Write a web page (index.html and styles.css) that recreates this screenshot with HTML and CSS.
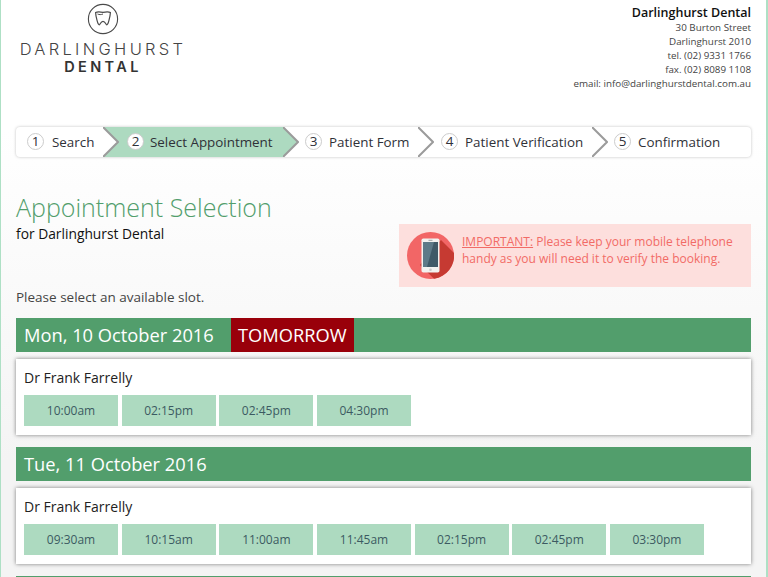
FILE: index.html
```html
<!DOCTYPE html>
<html lang="en">
<head>
<meta charset="utf-8">
<title>Appointment Selection</title>
<link rel="stylesheet" href="styles.css">
</head>
<body>
<div class="page">
  <header class="header">
    <div class="logo">
      <svg class="logo-mark" width="32" height="32" viewBox="0 0 32 32" aria-hidden="true">
        <circle cx="16" cy="16" r="14.6" fill="none" stroke="#4a4a4a" stroke-width="1.1"/>
        <path d="M8.6 9.6c2-1.3 4.4-.9 7.4-.2 3-.7 5.400-1.100 7.400.2-.1 2.900-.8 5.600-1.500 8-.5 1.800-.9 4.200-2.100 4.200-1.100 0-1.400-3.500-3.800-3.500s-2.700 3.500-3.800 3.500c-1.200 0-1.600-2.400-2.100-4.200-.7-2.400-1.400-5.100-1.500-8z" fill="none" stroke="#4a4a4a" stroke-width="1.200"/>
        <path d="M10.500 11c1.800.8 3.500.8 5.500 0" fill="none" stroke="#4a4a4a" stroke-width="1"/>
      </svg>
      <div class="logo-top">DARLINGHURST</div>
      <div class="logo-bottom">DENTAL</div>
    </div>
    <address class="contact">
      <strong>Darlinghurst Dental</strong>
      <span>30 Burton Street</span>
      <span>Darlinghurst 2010</span>
      <span>tel. (02) 9331 1766</span>
      <span>fax. (02) 8089 1108</span>
      <span>email: info@darlinghurstdental.com.au</span>
    </address>
  </header>

  <nav class="steps">
    <div class="step step-1"><span class="num">1</span>Search</div>
    <svg class="chev" width="16" height="30" viewBox="0 0 16 30" aria-hidden="true"><path d="M0 0L15 15L0 30H16V0Z" fill="#addac0"/><path d="M0 0L15 15L0 30" fill="none" stroke="#9b9b9b" stroke-width="2"/></svg>
    <div class="step step-2 active"><span class="num">2</span>Select Appointment</div>
    <svg class="chev" width="16" height="30" viewBox="0 0 16 30" aria-hidden="true"><path d="M0 0L15 15L0 30Z" fill="#addac0"/><path d="M0 0L15 15L0 30" fill="none" stroke="#9b9b9b" stroke-width="2"/></svg>
    <div class="step step-3"><span class="num">3</span>Patient Form</div>
    <svg class="chev" width="16" height="30" viewBox="0 0 16 30" aria-hidden="true"><path d="M0 0L15 15L0 30" fill="none" stroke="#9b9b9b" stroke-width="2"/></svg>
    <div class="step step-4"><span class="num">4</span>Patient Verification</div>
    <svg class="chev" width="16" height="30" viewBox="0 0 16 30" aria-hidden="true"><path d="M0 0L15 15L0 30" fill="none" stroke="#9b9b9b" stroke-width="2"/></svg>
    <div class="step step-5"><span class="num">5</span>Confirmation</div>
  </nav>

  <section class="intro">
    <div class="intro-left">
      <h1>Appointment Selection</h1>
      <p class="for">for Darlinghurst Dental</p>
    </div>
    <div class="alert">
      <svg class="alert-icon" width="47" height="47" viewBox="0 0 47 47" aria-hidden="true">
        <circle cx="23.500" cy="23.500" r="23.500" fill="#f26666"/>
        <path d="M34 8L47 21A23.500 23.500 0 0 1 27 46.800L13 33Z" fill="#c63a32"/>
        <rect x="14.500" y="6.500" width="18" height="34" rx="1.800" fill="#f2f2f0"/>
        <rect x="16" y="10" width="15" height="25" fill="#3f5a68"/>
        <path d="M16 10H27L20 35H16Z" fill="#5d7a88"/>
        <circle cx="23.500" cy="37.700" r="1.300" fill="#c9c9c9"/>
        <rect x="21.500" y="7.800" width="4" height="1" fill="#9aa0a3"/>
      </svg>
      <p><u>IMPORTANT:</u> Please keep your mobile telephone handy as you will need it to verify the booking.</p>
    </div>
  </section>

  <p class="hint">Please select an available slot.</p>

  <h2 class="day"><span class="day-name">Mon, 10 October 2016</span><span class="tag">TOMORROW</span></h2>
  <div class="card">
    <div class="doctor">Dr Frank Farrelly</div>
    <div class="slots">
      <a class="slot">10:00am</a><a class="slot">02:15pm</a><a class="slot">02:45pm</a><a class="slot">04:30pm</a>
    </div>
  </div>

  <h2 class="day"><span class="day-name">Tue, 11 October 2016</span></h2>
  <div class="card">
    <div class="doctor">Dr Frank Farrelly</div>
    <div class="slots">
      <a class="slot">09:30am</a><a class="slot">10:15am</a><a class="slot">11:00am</a><a class="slot">11:45am</a><a class="slot">02:15pm</a><a class="slot">02:45pm</a><a class="slot">03:30pm</a>
    </div>
  </div>

  <div class="day day-next"></div>
</div>
</body>
</html>
```
FILE: styles.css
```css
* { box-sizing: border-box; }
html, body { margin: 0; height: 577px; overflow: hidden; }
body {
  font-family: "Open Sans", "Liberation Sans", sans-serif;
  font-size: 12px;
  color: #333;
  background: #fff;
}
.page {
  height: 577px;
  overflow: hidden;
  padding: 0 15px 0 15px;
  border-left: 1px solid #aee0c5;
  border-right: 2px solid #aee0c5;
  background: linear-gradient(#fff 0, #fff 130px, #f4f4f4 460px, #f4f4f4 100%);
}
.header {
  display: flex;
  justify-content: space-between;
  height: 127px;
}
.logo {
  width: 174px;
  padding-top: 3px;
  display: flex;
  flex-direction: column;
  align-items: center;
  color: #444;
  line-height: 1;
}
.logo-mark { display: block; margin-bottom: 6px; }
.logo-top {
  font-family: "Inter", sans-serif;
  font-size: 16.500px;
  font-weight: 300;
  letter-spacing: 3.300px;
  white-space: nowrap;
  height: 18px;
}
.logo-bottom {
  font-family: "Inter", sans-serif;
  font-size: 14.500px;
  font-weight: 600;
  letter-spacing: 3.400px;
  margin-top: 1px;
  color: #333;
}
.contact {
  font-style: normal;
  text-align: right;
  display: flex;
  flex-direction: column;
  padding-top: 4px;
  font-size: 9.800px;
  line-height: 14px;
  color: #444;
}
.contact strong {
  font-size: 12.500px;
  font-weight: 600;
  color: #111;
  line-height: 17px;
}
.steps {
  display: flex;
  height: 30px;
  align-items: stretch;
  background: #fff;
  border-radius: 4px;
  box-shadow: 0 0 3px rgba(0,0,0,.25);
  font-size: 13.400px;
  color: #2f3138;
  width: 735px;
  overflow: hidden;
}
.step {
  display: flex;
  align-items: center;
  white-space: nowrap;
  padding-left: 8px;
  padding-bottom: 1px;
}
.step-1 { width: 87px; padding-left: 11px; }
.step-2 { width: 164px; }
.step-3 { width: 119px; padding-left: 6px; }
.step-4 { width: 158px; padding-left: 7px; }
.step-5 { flex: 1; padding-left: 6px; }
.step-1 .num { margin-right: 8px; }
.step-2 .num { margin-right: 6px; }
.active { background: #addac0; }
.chev { flex: none; display: block; }
.num {
  flex: none;
  width: 17px;
  height: 17px;
  border-radius: 50%;
  border: 1px solid #ccc;
  background: #fff;
  margin-right: 7px;
  display: flex;
  align-items: center;
  justify-content: center;
  font-size: 13.500px;
  line-height: 1;
}
.intro {
  display: flex;
  justify-content: space-between;
  align-items: flex-start;
  margin-top: 33px;
}
h1 {
  margin: 0;
  font-size: 25px;
  font-weight: 300;
  line-height: 34px;
  color: #529e6c;
}
.for {
  margin: 1px 0 0;
  font-size: 13.800px;
  font-weight: 400;
  line-height: 18px;
  color: #111;
}
.alert {
  width: 352px;
  height: 63px;
  margin-top: 34px;
  background: #fddfdd;
  display: flex;
  align-items: center;
  padding-left: 8px;
  gap: 8px;
  color: #f26b66;
  font-size: 12px;
  line-height: 17px;
}
.alert-icon { flex: none; }
.alert p { margin: 0 0 12px; width: 285px; }
.hint {
  margin: 1px 0 12px;
  font-size: 13.500px;
  line-height: 18px;
  color: #444;
}
.day {
  display: flex;
  height: 34px;
  margin: 0;
  background: #529e6c;
  color: #fff;
  font-size: 18.300px;
  font-weight: 400;
  line-height: 34px;
  width: 735px;
}
.day-name { padding: 0 15px 0 8px; width: 215px; white-space: nowrap; }
.tag {
  background: #99000a;
  padding: 0 7px;
  width: 123px;
  white-space: nowrap;
}
.card {
  width: 735px;
  height: 76px;
  margin: 7px 0 12px;
  background: #fff;
  box-shadow: 0 0 4px rgba(0,0,0,.5);
  padding: 10px 8px 0;
}
.doctor {
  font-size: 14px;
  line-height: 18px;
  color: #222;
}
.slots {
  display: flex;
  gap: 3.670px;
  margin-top: 8px;
}
.slot {
  width: 94px;
  height: 31px;
  background: #addac0;
  color: #3c5a62;
  font-size: 12px;
  line-height: 31px;
  text-align: center;
}
```
